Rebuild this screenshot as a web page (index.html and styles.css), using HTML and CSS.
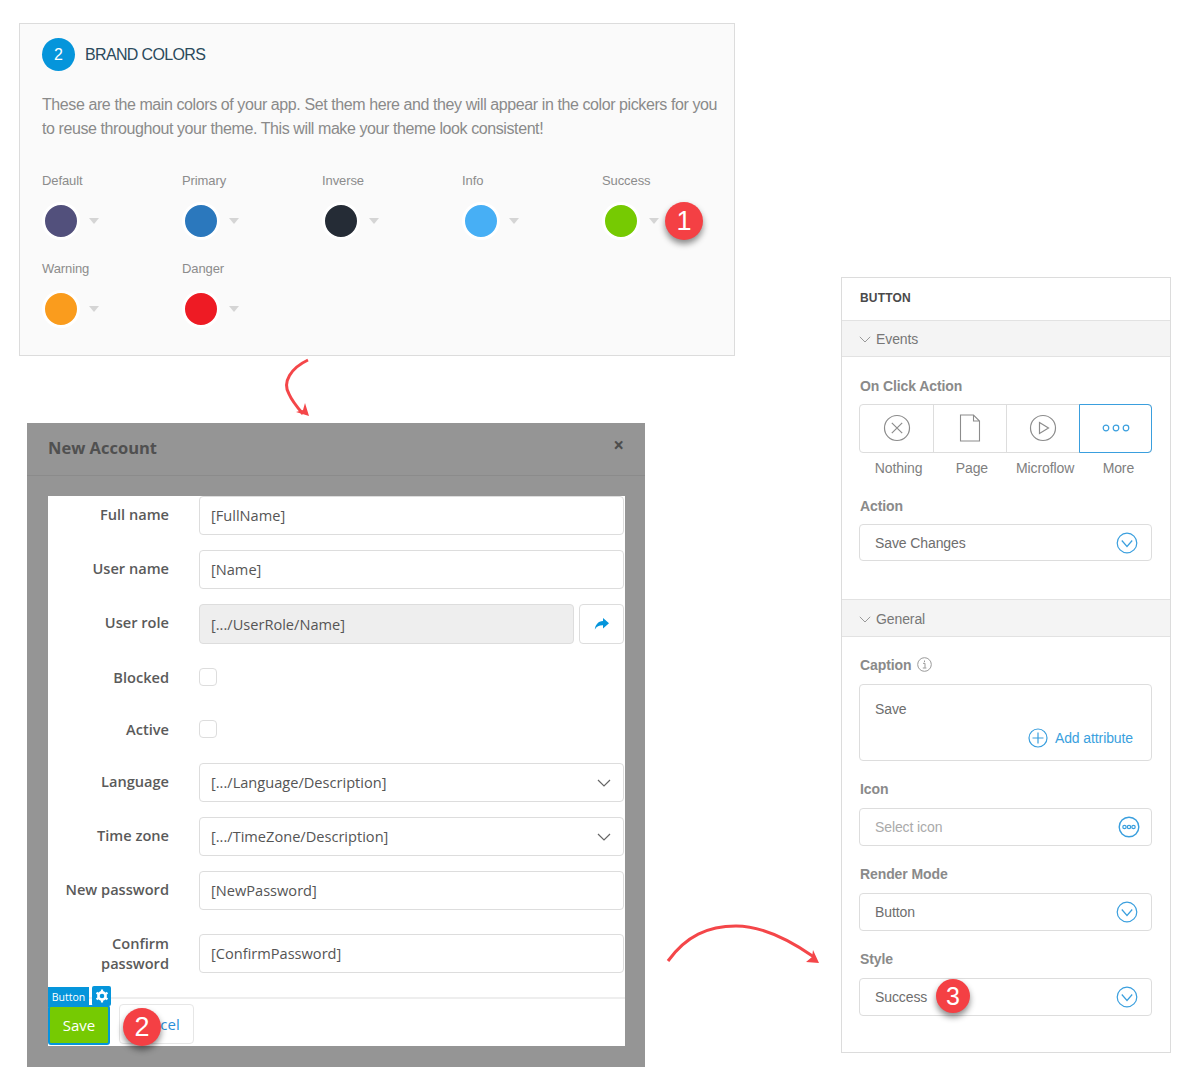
FILE: index.html
```html
<!DOCTYPE html>
<html lang="en">
<head>
    <meta charset="UTF-8">
    <title>Brand colors and button style</title>
    <link rel="stylesheet" href="styles.css">
</head>
<body>
    <div class="canvas">
        <section class="brand">
            <div class="brand-head">
                <span class="step">2</span>
                <h2>BRAND COLORS</h2>
            </div>
            <p class="brand-text">These are the main colors of your app. Set them here and they will appear in the color pickers for you to reuse throughout your theme. This will make your theme look consistent!</p>
            <div class="swatches">
                <div class="swatch"><span class="swatch-name">Default</span><div class="swatch-pick"><i class="dot dot-default"></i><i class="caret"></i></div></div>
                <div class="swatch"><span class="swatch-name">Primary</span><div class="swatch-pick"><i class="dot dot-primary"></i><i class="caret"></i></div></div>
                <div class="swatch"><span class="swatch-name">Inverse</span><div class="swatch-pick"><i class="dot dot-inverse"></i><i class="caret"></i></div></div>
                <div class="swatch"><span class="swatch-name">Info</span><div class="swatch-pick"><i class="dot dot-info"></i><i class="caret"></i></div></div>
                <div class="swatch"><span class="swatch-name">Success</span><div class="swatch-pick"><i class="dot dot-success"></i><i class="caret"></i></div></div>
                <div class="swatch"><span class="swatch-name">Warning</span><div class="swatch-pick"><i class="dot dot-warning"></i><i class="caret"></i></div></div>
                <div class="swatch"><span class="swatch-name">Danger</span><div class="swatch-pick"><i class="dot dot-danger"></i><i class="caret"></i></div></div>
            </div>
        </section>

        <section class="modal">
            <div class="modal-head">
                <h2>New Account</h2>
                <span class="modal-close">×</span>
            </div>
            <div class="modal-body">
                <form class="form">
                    <div class="row row-full"><label>Full name</label><div class="input">[FullName]</div></div>
                    <div class="row row-name"><label>User name</label><div class="input">[Name]</div></div>
                    <div class="row row-role">
                        <label>User role</label>
                        <div class="input input-off">[.../UserRole/Name]</div>
                        <div class="go">
                            <svg width="16" height="14" viewBox="0 0 16 14"><path d="M9 1l6 5.2L9 11.5V8.3C5.4 8.2 2.6 9.3.8 12.6 1.3 7.8 4 4.2 9 3.9z" fill="#0595db"/></svg>
                        </div>
                    </div>
                    <div class="row row-check"><label>Blocked</label><i class="check"></i></div>
                    <div class="row row-check"><label>Active</label><i class="check"></i></div>
                    <div class="row row-lang">
                        <label>Language</label>
                        <div class="input input-select">[.../Language/Description]
                            <svg width="14" height="8" viewBox="0 0 14 8"><path d="M1 1l6 6 6-6" fill="none" stroke="#666" stroke-width="1.2"/></svg>
                        </div>
                    </div>
                    <div class="row row-zone">
                        <label>Time zone</label>
                        <div class="input input-select">[.../TimeZone/Description]
                            <svg width="14" height="8" viewBox="0 0 14 8"><path d="M1 1l6 6 6-6" fill="none" stroke="#666" stroke-width="1.2"/></svg>
                        </div>
                    </div>
                    <div class="row row-pass"><label>New password</label><div class="input">[NewPassword]</div></div>
                    <div class="row row-confirm"><label>Confirm password</label><div class="input">[ConfirmPassword]</div></div>
                </form>
                <div class="form-foot">
                    <button type="button" class="btn-save">Save</button>
                    <button type="button" class="btn-cancel">Cancel</button>
                </div>
                <div class="btn-tag">Button</div>
                <div class="btn-gear">
                    <svg width="14" height="14" viewBox="0 0 14 14"><circle cx="7" cy="7" r="3.6" fill="none" stroke="#fff" stroke-width="2.6"/><path d="M7 .6v2.2M7 11.2v2.2M1.5 3.8l1.9 1.1M10.6 9.1l1.9 1.1M1.5 10.2l1.9-1.1M10.6 4.9l1.9-1.1" stroke="#fff" stroke-width="2.2"/></svg>
                </div>
            </div>
        </section>

        <aside class="props">
            <div class="props-title">BUTTON</div>
            <div class="band">
                <svg width="12" height="7" viewBox="0 0 12 7"><path d="M.8.8L6 6l5.2-5.2" fill="none" stroke="#999"/></svg>
                <span>Events</span>
            </div>
            <div class="props-body props-events">
                <div class="prop-label">On Click Action</div>
                <div class="tabs">
                    <div class="tab">
                        <svg width="28" height="28" viewBox="0 0 28 28"><circle cx="14" cy="14" r="12.5" fill="none" stroke="#8c8c8c" stroke-width="1.2"/><path d="M8.8 8.8l10.4 10.4M19.2 8.8L8.8 19.2" stroke="#8c8c8c" stroke-width="1.2"/></svg>
                    </div>
                    <div class="tab">
                        <svg width="22" height="28" viewBox="0 0 22 28"><path d="M1.5 1h13l6 6v20h-19zM14.5 1v6h6" fill="none" stroke="#8c8c8c" stroke-width="1.1"/></svg>
                    </div>
                    <div class="tab">
                        <svg width="28" height="28" viewBox="0 0 28 28"><circle cx="14" cy="14" r="12.5" fill="none" stroke="#8c8c8c" stroke-width="1.2"/><path d="M10.5 8.5l9 5.5-9 5.5z" fill="none" stroke="#8c8c8c" stroke-width="1.2"/></svg>
                    </div>
                    <div class="tab tab-on">
                        <svg width="28" height="8" viewBox="0 0 28 8"><circle cx="4" cy="4" r="2.8" fill="none" stroke="#3a9fde" stroke-width="1.2"/><circle cx="14" cy="4" r="2.8" fill="none" stroke="#3a9fde" stroke-width="1.2"/><circle cx="24" cy="4" r="2.8" fill="none" stroke="#3a9fde" stroke-width="1.2"/></svg>
                    </div>
                </div>
                <div class="tab-names">
                    <span>Nothing</span><span>Page</span><span>Microflow</span><span>More</span>
                </div>
                <div class="prop-label prop-action">Action</div>
                <div class="pick pick-short">
                    <span>Save Changes</span>
                    <svg class="pick-icon" width="22" height="22" viewBox="0 0 22 22"><circle cx="11" cy="11" r="9.8" fill="none" stroke="#3a9fde" stroke-width="1.2"/><path d="M5.8 8.500L11 14.500l5.200-6" fill="none" stroke="#3a9fde" stroke-width="1.2"/></svg>
                </div>
            </div>
            <div class="band band-general">
                <svg width="12" height="7" viewBox="0 0 12 7"><path d="M.8.8L6 6l5.2-5.2" fill="none" stroke="#999"/></svg>
                <span>General</span>
            </div>
            <div class="props-body props-general">
                <div class="field">
                    <div class="prop-label">Caption
                        <svg class="info" width="15" height="15" viewBox="0 0 15 15"><circle cx="7.5" cy="7.5" r="6.8" fill="none" stroke="#999"/><path d="M6 6.3h2v4.500M5.800 11h3.600M7.500 3.500v1.500" fill="none" stroke="#999"/></svg>
                    </div>
                    <div class="caption-box">
                        <div>Save</div>
                        <div class="add-attr">
                            <svg width="20" height="20" viewBox="0 0 20 20"><circle cx="10" cy="10" r="9" fill="none" stroke="#3a9fde" stroke-width="1.2"/><path d="M10 4.5v11M4.500 10h11" stroke="#3a9fde" stroke-width="1.2"/></svg>
                            <span>Add attribute</span>
                        </div>
                    </div>
                </div>
                <div class="field">
                    <div class="prop-label">Icon</div>
                    <div class="pick">
                        <span class="pick-empty">Select icon</span>
                        <svg class="pick-icon pick-more" width="22" height="22" viewBox="0 0 22 22"><circle cx="11" cy="11" r="9.8" fill="none" stroke="#3a9fde" stroke-width="1.4"/><circle cx="6.500" cy="11" r="1.700" fill="none" stroke="#3a9fde" stroke-width="1.2"/><circle cx="11" cy="11" r="1.700" fill="none" stroke="#3a9fde" stroke-width="1.2"/><circle cx="15.500" cy="11" r="1.700" fill="none" stroke="#3a9fde" stroke-width="1.2"/></svg>
                    </div>
                </div>
                <div class="field">
                    <div class="prop-label">Render Mode</div>
                    <div class="pick">
                        <span>Button</span>
                        <svg class="pick-icon" width="22" height="22" viewBox="0 0 22 22"><circle cx="11" cy="11" r="9.8" fill="none" stroke="#3a9fde" stroke-width="1.2"/><path d="M5.8 8.500L11 14.500l5.200-6" fill="none" stroke="#3a9fde" stroke-width="1.2"/></svg>
                    </div>
                </div>
                <div class="field">
                    <div class="prop-label">Style</div>
                    <div class="pick">
                        <span>Success</span>
                        <svg class="pick-icon" width="22" height="22" viewBox="0 0 22 22"><circle cx="11" cy="11" r="9.8" fill="none" stroke="#3a9fde" stroke-width="1.2"/><path d="M5.8 8.500L11 14.500l5.200-6" fill="none" stroke="#3a9fde" stroke-width="1.2"/></svg>
                    </div>
                </div>
            </div>
        </aside>

        <svg class="arrow arrow-down" width="40" height="62" viewBox="0 0 40 62">
            <path d="M26 2C9 10 0 24 7 36c3 7 8 13 14 20" fill="none" stroke="#f44649" stroke-width="3"/>
            <path d="M27 58l-13-4 7-2 2-7z" fill="#f44649"/>
        </svg>
        <svg class="arrow arrow-right" width="160" height="46" viewBox="0 0 160 46">
            <path d="M2 39C20 14 42 4 70 4c28 0 55 15 78 31" fill="none" stroke="#f44649" stroke-width="3"/>
            <path d="M153 41l-13-1 6-5 1-7z" fill="#f44649"/>
        </svg>

        <span class="badge badge-1">1</span>
        <span class="badge badge-2">2</span>
        <span class="badge badge-3">3</span>
    </div>
</body>
</html>
```

FILE: styles.css
```css
* {
    box-sizing: border-box;
}
body {
    margin: 0;
    background-color: #fff;
    font-family: "Liberation Sans", Arial, sans-serif;
    overflow: hidden;
}
h2 {
    margin: 0;
    font-weight: normal;
}
.canvas {
    position: relative;
    width: 1192px;
    height: 1067px;
    overflow: hidden;
}

/* brand colors panel */
.brand {
    position: absolute;
    left: 19px;
    top: 23px;
    width: 716px;
    height: 333px;
    padding: 14px 10px 0 22px;
    background-color: #fafafa;
    border: 1px solid #dcdcdc;
}
.brand-head {
    display: flex;
    align-items: center;
    gap: 10px;
}
.brand-head h2 {
    font-size: 16px;
    letter-spacing: -0.65px;
    color: #2b4a5c;
}
.step {
    width: 33px;
    height: 33px;
    border-radius: 50%;
    background-color: #0595db;
    color: #fff;
    font-size: 16px;
    line-height: 33px;
    text-align: center;
}
.brand-text {
    margin: 22px 0 0;
    font-size: 16px;
    line-height: 24px;
    letter-spacing: -0.41px;
    color: #8a8a8a;
}
.swatches {
    display: grid;
    grid-template-columns: repeat(5, 140px);
    row-gap: 20px;
    margin-top: 31px;
}
.swatch-name {
    display: block;
    height: 18px;
    font-size: 13px;
    line-height: 18px;
    letter-spacing: -0.1px;
    color: #8c8c8c;
}
.swatch-pick {
    display: flex;
    align-items: center;
    height: 39px;
    margin-top: 11px;
    gap: 9px;
}
.dot {
    width: 38px;
    height: 38px;
    border-radius: 50%;
    border: 3px solid #fff;
}
.dot-default { background-color: #52507c; }
.dot-primary { background-color: #2b78bd; }
.dot-inverse { background-color: #252c36; }
.dot-info { background-color: #47aff5; }
.dot-success { background-color: #76ca02; }
.dot-warning { background-color: #fa9c1d; }
.dot-danger { background-color: #ee1b24; }
.caret {
    width: 0;
    height: 0;
    border-left: 5px solid transparent;
    border-right: 5px solid transparent;
    border-top: 6px solid #d5d5d5;
}

/* new account modal */
.modal {
    position: absolute;
    left: 27px;
    top: 423px;
    width: 618px;
    height: 644px;
    background-color: #959595;
    font-family: "Open Sans", sans-serif;
}
.modal-head {
    position: relative;
    height: 53px;
    padding: 13px 21px 0;
    border-bottom: 1px solid #8b8b8b;
}
.modal-head h2 {
    font-size: 16.5px;
    line-height: 24px;
    font-weight: 700;
    color: #505050;
}
.modal-close {
    position: absolute;
    right: 21px;
    top: 9px;
    font-size: 19px;
    font-weight: 700;
    line-height: 26px;
    color: #4d4d4d;
}
.modal-body {
    position: relative;
    width: 577px;
    height: 550px;
    margin: 20px 0 0 21px;
    background-color: #fff;
}
.form {
    height: 503px;
    border-bottom: 2px solid #eee;
}
.row {
    display: flex;
    align-items: flex-start;
    padding-right: 1px;
}
.row label {
    width: 121px;
    margin-right: 30px;
    padding-top: 7px;
    font-size: 14.6px;
    font-weight: 600;
    line-height: 23px;
    text-align: right;
    color: #5a5a5a;
}
.input {
    flex: 1;
    height: 39px;
    padding: 0 11px;
    border: 1px solid #ddd;
    border-radius: 4px;
    font-size: 14.6px;
    line-height: 37px;
    color: #555;
    background-color: #fff;
}
.input-off {
    height: 40px;
    line-height: 39px;
    background-color: #eee;
}
.input-select {
    display: flex;
    justify-content: space-between;
    align-items: center;
}
.input-select svg {
    margin-right: 1px;
}
.go {
    display: flex;
    align-items: center;
    justify-content: center;
    width: 45px;
    height: 40px;
    margin-left: 5px;
    border: 1px solid #ddd;
    border-radius: 4px;
}
.row-name { margin-top: 15px; }
.row-role { margin-top: 15px; }
.row-check { height: 18px; margin-top: 24px; }
.row-check + .row-check { margin-top: 34px; }
.row-check label { padding-top: 0; line-height: 18px; }
.row-lang { margin-top: 25px; }
.row-zone { margin-top: 15px; }
.row-pass { margin-top: 15px; }
.row-confirm { margin-top: 24px; }
.row-confirm label { padding-top: 0; margin-top: -1px; line-height: 20px; }
.check {
    width: 18px;
    height: 18px;
    border: 1px solid #ddd;
    border-radius: 4px;
}
.form-foot {
    display: flex;
    gap: 9px;
    margin-top: 5px;
}
.btn-save {
    width: 62px;
    height: 40px;
    margin: 1px 0 0;
    padding: 0;
    background-color: #76ca02;
    border: 2px solid #0595db;
    border-radius: 3px;
    font-family: "Open Sans", sans-serif;
    font-size: 15px;
    color: #fff;
}
.btn-cancel {
    width: 75px;
    height: 40px;
    padding: 0;
    background-color: #fff;
    border: 1px solid #e6e6e6;
    border-radius: 4px;
    font-family: "Open Sans", sans-serif;
    font-size: 15px;
    color: #2b8fd8;
}
.btn-tag {
    position: absolute;
    left: 0;
    top: 491px;
    width: 41px;
    height: 20px;
    background-color: #0595db;
    color: #fff;
    font-size: 10.5px;
    line-height: 20px;
    text-align: center;
}
.btn-gear {
    position: absolute;
    left: 44px;
    top: 490px;
    display: flex;
    align-items: center;
    justify-content: center;
    width: 19px;
    height: 20px;
    background-color: #0595db;
    border-radius: 2px;
}

/* properties panel */
.props {
    position: absolute;
    left: 841px;
    top: 277px;
    width: 330px;
    height: 776px;
    border: 1px solid #dcdcdc;
    background-color: #fff;
    font-size: 14px;
    letter-spacing: -0.1px;
    color: #666;
}
.props-title {
    height: 42px;
    padding-left: 18px;
    font-size: 12px;
    font-weight: 700;
    line-height: 40px;
    letter-spacing: 0.2px;
    color: #4a4a4a;
}
.band {
    display: flex;
    align-items: center;
    gap: 5px;
    height: 37px;
    padding: 1px 0 0 17px;
    background-color: #f4f4f4;
    border-top: 1px solid #e2e2e2;
    border-bottom: 1px solid #e2e2e2;
    color: #777;
}
.band-general {
    height: 38px;
    padding-top: 2px;
}
.props-events {
    height: 242px;
}
.props-body {
    padding: 20px 18px 0 17px;
}
.props-general {
    padding-top: 19px;
}
.prop-label {
    display: flex;
    align-items: center;
    gap: 6px;
    height: 18px;
    margin-bottom: 10px;
    padding-left: 1px;
    font-weight: 700;
    line-height: 18px;
    color: #8a8a8a;
}
.info {
    margin-top: -1px;
}
.tabs {
    display: flex;
    height: 49px;
    margin-top: -1px;
    border: 1px solid #ddd;
    border-radius: 4px;
}
.tab {
    display: flex;
    align-items: center;
    justify-content: center;
    flex: none;
    width: 73px;
    padding-bottom: 2px;
    border-right: 1px solid #ddd;
}
.tab:first-child {
    width: 74px;
}
.tab-on {
    flex: 1;
    margin: -1px -1px -1px -1px;
    border: 1px solid #3a9fde;
    border-radius: 0 4px 4px 0;
}
.tab-names {
    display: flex;
    margin: 7px -3px 0 3px;
    line-height: 16px;
    color: #808080;
}
.tab-names span {
    flex: 1;
    text-align: center;
}
.prop-action {
    margin-top: 21px;
    margin-bottom: 9px;
}
.pick {
    display: flex;
    align-items: center;
    justify-content: space-between;
    height: 38px;
    padding: 0 13px 0 15px;
    border: 1px solid #ddd;
    border-radius: 4px;
    color: #6e6e6e;
}
.pick-short {
    height: 37px;
}
.pick-empty {
    color: #aaa;
}
.pick-more {
    margin-right: -2px;
}
.field {
    margin-bottom: 19px;
}
.caption-box {
    height: 77px;
    padding: 16px 18px 0 15px;
    border: 1px solid #ddd;
    border-radius: 4px;
    line-height: 17px;
    color: #6e6e6e;
}
.add-attr {
    display: flex;
    align-items: center;
    justify-content: flex-end;
    gap: 7px;
    margin-top: 10px;
    color: #3a9fde;
}

/* numbered callouts */
.arrow {
    position: absolute;
}
.arrow-down {
    left: 282px;
    top: 358px;
}
.arrow-right {
    left: 666px;
    top: 922px;
}
.badge {
    position: absolute;
    width: 38px;
    height: 38px;
    border-radius: 50%;
    background-color: #f44044;
    box-shadow: 0 4px 6px rgba(0, 0, 0, 0.45);
    color: #fff;
    font-size: 27px;
    line-height: 38px;
    text-align: center;
}
.badge-1 { left: 665px; top: 202px; }
.badge-2 { left: 123px; top: 1008px; }
.badge-3 { left: 936px; top: 979px; width: 34px; height: 34px; font-size: 25px; line-height: 34px; }
```
